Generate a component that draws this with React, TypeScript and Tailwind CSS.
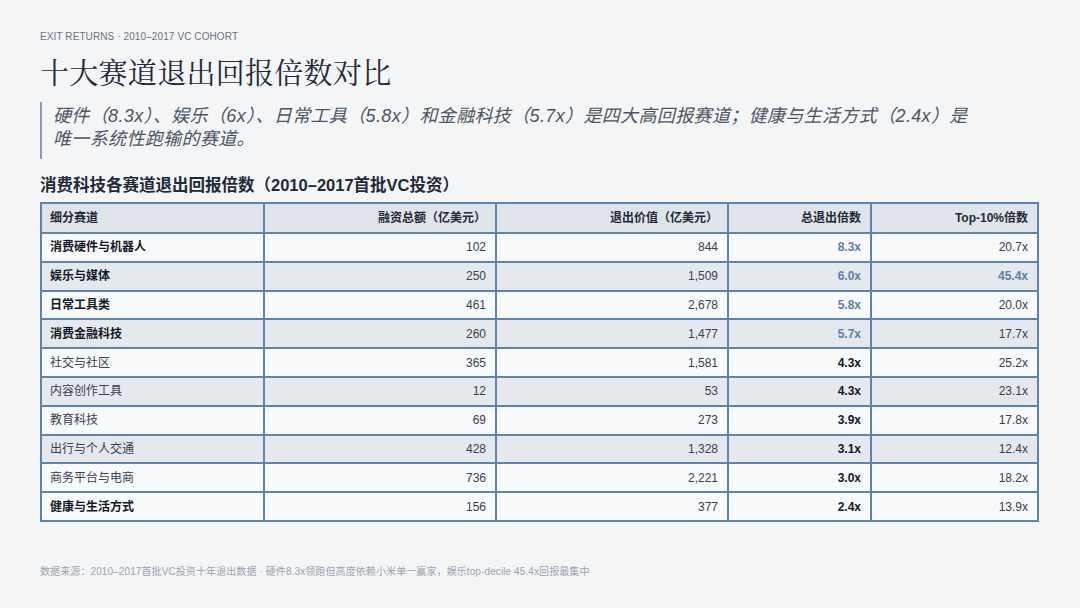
import React from 'react';

type Row = {
  name: string;
  raised: string;
  exit: string;
  multiple: string;
  top: string;
  boldName?: boolean;
  blueMultiple?: boolean;
  blueTop?: boolean;
  shaded?: boolean;
};

const ROWS: Row[] = [
  { name: '消费硬件与机器人', raised: '102', exit: '844', multiple: '8.3x', top: '20.7x', boldName: true, blueMultiple: true },
  { name: '娱乐与媒体', raised: '250', exit: '1,509', multiple: '6.0x', top: '45.4x', boldName: true, blueMultiple: true, blueTop: true, shaded: true },
  { name: '日常工具类', raised: '461', exit: '2,678', multiple: '5.8x', top: '20.0x', boldName: true, blueMultiple: true },
  { name: '消费金融科技', raised: '260', exit: '1,477', multiple: '5.7x', top: '17.7x', boldName: true, blueMultiple: true, shaded: true },
  { name: '社交与社区', raised: '365', exit: '1,581', multiple: '4.3x', top: '25.2x' },
  { name: '内容创作工具', raised: '12', exit: '53', multiple: '4.3x', top: '23.1x', shaded: true },
  { name: '教育科技', raised: '69', exit: '273', multiple: '3.9x', top: '17.8x' },
  { name: '出行与个人交通', raised: '428', exit: '1,328', multiple: '3.1x', top: '12.4x', shaded: true },
  { name: '商务平台与电商', raised: '736', exit: '2,221', multiple: '3.0x', top: '18.2x' },
  { name: '健康与生活方式', raised: '156', exit: '377', multiple: '2.4x', top: '13.9x', boldName: true },
];

const sans = { fontFamily: '"Liberation Sans", "Noto Sans CJK SC", sans-serif' };
const serif = { fontFamily: '"Liberation Serif", "Noto Serif CJK SC", "Noto Sans CJK SC", serif' };

const cell = 'border-2 border-[#5f84aa] h-[28.8px] pl-[8px] pr-[9px] py-0 text-[12px] leading-none';

export default function App() {
  return (
    <div className="w-[1080px] h-[608px] bg-[#f3f5f7] overflow-hidden px-[40px] pt-[31px] text-[#1f2937]" style={sans}>
      <div className="text-[10px] leading-[12px] tracking-[0.01em] text-[#6b7280]">
        EXIT RETURNS · 2010–2017 VC COHORT
      </div>

      <h1 className="mt-[11px] text-[29px] leading-[40px] text-[#1f2937] tracking-[0.01em]" style={serif}>
        十大赛道退出回报倍数对比
      </h1>

      <div className="mt-[8px] border-l-2 border-[#8c9db1] pl-[11px] pt-[3px] pb-[8px] text-[18px] leading-[23px] italic text-[#4b5563] h-[57px] tracking-[0.02em]">
        <p>硬件（8.3x）、娱乐（6x）、日常工具（5.8x）和金融科技（5.7x）是四大高回报赛道；健康与生活方式（2.4x）是</p>
        <p>唯一系统性跑输的赛道。</p>
      </div>

      <h2 className="mt-[16px] text-[16.5px] leading-[20px] font-bold text-[#1f2937]">
        消费科技各赛道退出回报倍数（2010–2017首批VC投资）
      </h2>

      <table className="mt-[7px] w-[997px] border-collapse border-2 border-[#5f84aa] table-fixed">
        <colgroup>
          <col className="w-[223px]" />
          <col className="w-[232px]" />
          <col className="w-[232px]" />
          <col className="w-[143px]" />
          <col className="w-[167px]" />
        </colgroup>
        <thead>
          <tr className="bg-[#dfe4ea]">
            <th className={`${cell} h-[30px] text-left text-[10px] font-bold`}>细分赛道</th>
            <th className={`${cell} h-[30px] text-right text-[10px] font-bold`}>融资总额（亿美元）</th>
            <th className={`${cell} h-[30px] text-right text-[10px] font-bold`}>退出价值（亿美元）</th>
            <th className={`${cell} h-[30px] text-right text-[10px] font-bold`}>总退出倍数</th>
            <th className={`${cell} h-[30px] text-right text-[10px] font-bold`}>Top-10%倍数</th>
          </tr>
        </thead>
        <tbody>
          {ROWS.map(row => (
            <tr key={row.name} className={row.shaded ? 'bg-[#e5e8ed]' : 'bg-[#f8f9fb]'}>
              <td className={`${cell} text-left ${row.boldName ? 'font-bold text-[#111827]' : 'text-[#374151]'}`}>
                {row.name}
              </td>
              <td className={`${cell} text-right text-[#374151]`}>{row.raised}</td>
              <td className={`${cell} text-right text-[#374151]`}>{row.exit}</td>
              <td className={`${cell} text-right font-bold ${row.blueMultiple ? 'text-[#5b80a8]' : 'text-[#111827]'}`}>
                {row.multiple}
              </td>
              <td className={`${cell} text-right ${row.blueTop ? 'font-bold text-[#5b80a8]' : 'text-[#374151]'}`}>
                {row.top}
              </td>
            </tr>
          ))}
        </tbody>
      </table>

      <div className="mt-[44px] text-[10px] leading-[12px] text-[#9ca3af] tracking-[0.01em]">
        数据来源：2010–2017首批VC投资十年退出数据 · 硬件8.3x领跑但高度依赖小米单一赢家，娱乐top-decile 45.4x回报最集中
      </div>
    </div>
  );
}
